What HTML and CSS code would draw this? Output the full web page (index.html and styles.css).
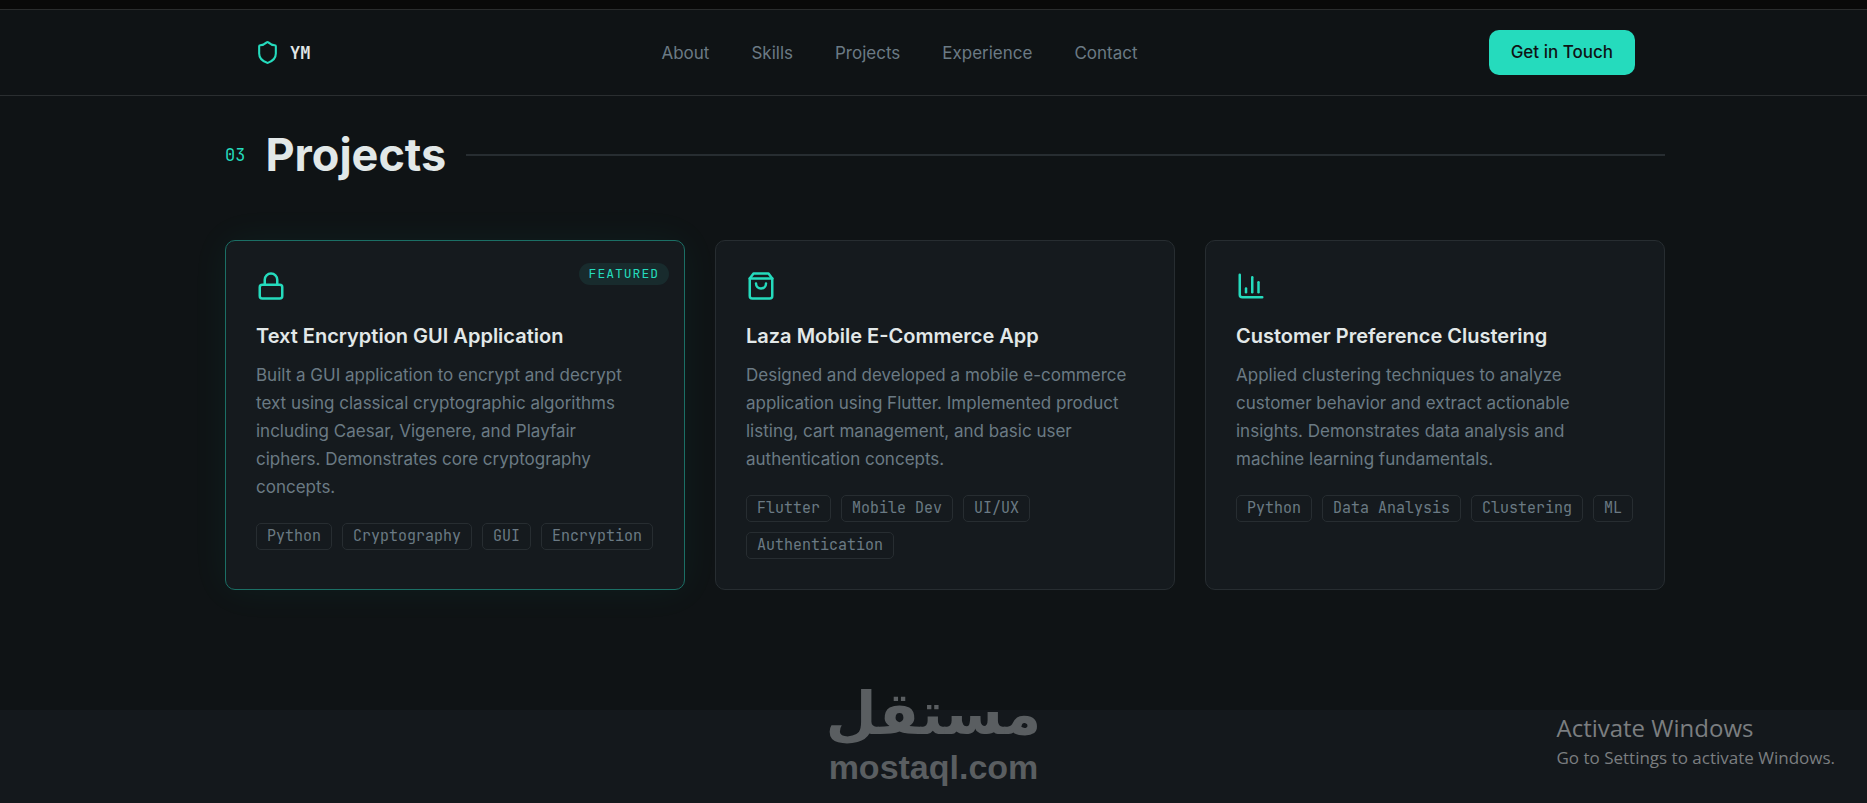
FILE: index.html
```html
<!DOCTYPE html>
<html lang="en">
<head>
<meta charset="utf-8">
<meta name="viewport" content="width=device-width, initial-scale=1">
<title>YM - Projects</title>
<link rel="stylesheet" href="styles.css">
</head>
<body>
<header class="header">
  <div class="container header-inner">
    <a class="logo" href="#top">
      <svg class="logo-icon" viewBox="0 0 24 24" aria-hidden="true"><path d="M20 13c0 5-3.500 7.500-7.660 8.950a1 1 0 0 1-.67-.01C7.500 20.500 4 18 4 13V6a1 1 0 0 1 1-1c2 0 4.500-1.200 6.240-2.720a1.170 1.170 0 0 1 1.520 0C14.510 3.810 17 5 19 5a1 1 0 0 1 1 1z"/></svg>
      <span>YM</span>
    </a>
    <nav class="nav" aria-label="Main">
      <a href="#about">About</a>
      <a href="#skills">Skills</a>
      <a href="#projects">Projects</a>
      <a href="#experience">Experience</a>
      <a href="#contact">Contact</a>
    </nav>
    <button class="cta" type="button">Get in Touch</button>
  </div>
</header>

<main>
  <section class="projects" id="projects">
    <div class="container">
      <div class="section-head">
        <span class="section-number">03</span>
        <h2 class="section-title">Projects</h2>
        <span class="section-rule"></span>
      </div>
      <div class="cards">
        <article class="card card-featured">
          <span class="badge">FEATURED</span>
          <svg class="card-icon" viewBox="0 0 24 24" aria-hidden="true"><rect x="3" y="11" width="18" height="11" rx="2"/><path d="M7 11V7a5 5 0 0 1 10 0v4"/></svg>
          <h3 class="card-title">Text Encryption GUI Application</h3>
          <p class="card-text">Built a GUI application to encrypt and decrypt text using classical cryptographic algorithms including Caesar, Vigenere, and Playfair ciphers. Demonstrates core cryptography concepts.</p>
          <ul class="tags"><li>Python</li><li>Cryptography</li><li>GUI</li><li>Encryption</li></ul>
        </article>
        <article class="card">
          <svg class="card-icon" viewBox="0 0 24 24" aria-hidden="true"><path d="M6 2 3 6v14a2 2 0 0 0 2 2h14a2 2 0 0 0 2-2V6l-3-4Z"/><path d="M3 6h18"/><path d="M16 10a4 4 0 0 1-8 0"/></svg>
          <h3 class="card-title">Laza Mobile E-Commerce App</h3>
          <p class="card-text">Designed and developed a mobile e-commerce application using Flutter. Implemented product listing, cart management, and basic user authentication concepts.</p>
          <ul class="tags"><li>Flutter</li><li>Mobile Dev</li><li>UI/UX</li><li>Authentication</li></ul>
        </article>
        <article class="card">
          <svg class="card-icon" viewBox="0 0 24 24" aria-hidden="true"><path d="M3 3v16a2 2 0 0 0 2 2h16"/><path d="M18 17V9"/><path d="M13 17V5"/><path d="M8 17v-3"/></svg>
          <h3 class="card-title">Customer Preference Clustering</h3>
          <p class="card-text">Applied clustering techniques to analyze customer behavior and extract actionable insights. Demonstrates data analysis and machine learning fundamentals.</p>
          <ul class="tags"><li>Python</li><li>Data Analysis</li><li>Clustering</li><li>ML</li></ul>
        </article>
      </div>
    </div>
  </section>
</main>

<div class="watermark">
  <span class="watermark-ar" lang="ar" dir="rtl">مستقل</span>
  <span class="watermark-en">mostaql.com</span>
</div>
<div class="activation">
  <p class="activation-title">Activate Windows</p>
  <p class="activation-text">Go to Settings to activate Windows.</p>
</div>
</body>
</html>
```
FILE: styles.css
```css
:root {
  --bg: #0f1315;
  --surface: #151a1e;
  --band: #14181c;
  --border: #272d31;
  --text: #e2e8e8;
  --muted: #6b7a84;
  --accent: #25dbbd;
  --sans: Inter, "Liberation Sans", sans-serif;
  --mono: "JetBrains Mono", "DejaVu Sans Mono", monospace;
}

* { box-sizing: border-box; }

body {
  margin: 0;
  min-height: 100vh;
  display: flex;
  flex-direction: column;
  position: relative;
  overflow: hidden;
  border-top: 9px solid #090909;
  background: var(--band);
  color: var(--text);
  font-family: var(--sans);
  font-size: 17px;
}

a { color: inherit; text-decoration: none; }

.container {
  width: 100%;
  max-width: 1440px;
  margin: 0 auto;
}

.header {
  border-top: 1px solid #2a2c2d;
  border-bottom: 1px solid #2a2e30;
  background: var(--bg);
  padding-left: 23px;
}

.header-inner {
  display: flex;
  align-items: center;
  justify-content: space-between;
  padding: 20px 30px;
}

.logo {
  display: flex;
  align-items: center;
  gap: 10px;
  font-family: var(--mono);
  font-weight: 700;
}

.logo-icon, .card-icon {
  display: block;
  fill: none;
  stroke: var(--accent);
  stroke-width: 2;
  stroke-linecap: round;
  stroke-linejoin: round;
}

.logo-icon { width: 25px; height: 25px; }

.nav {
  display: flex;
  gap: 42px;
  color: var(--muted);
}

.cta {
  padding: 10px 22px;
  border: 0;
  border-radius: 10px;
  background: var(--accent);
  color: #0f1315;
  font: 500 17px/25px var(--sans);
}

.projects {
  padding: 26px 0 120px 23px;
  background: var(--bg);
}

.section-head {
  display: flex;
  align-items: center;
  gap: 20px;
  margin-bottom: 52px;
}

.section-number {
  color: var(--accent);
  font-family: var(--mono);
}

.section-title {
  margin: 0;
  font-size: 45px;
  line-height: 66px;
  font-weight: 700;
}

.section-rule {
  flex: 1;
  height: 2px;
  background: var(--border);
}

.cards {
  display: grid;
  grid-template-columns: repeat(3, 1fr);
  gap: 30px;
}

.card {
  position: relative;
  padding: 30px;
  border: 1px solid var(--border);
  border-radius: 10px;
  background: var(--surface);
}

.card-featured {
  border-color: #1b6f65;
  box-shadow: 0 0 38px rgba(37, 219, 189, 0.06);
}

.badge {
  position: absolute;
  top: 22px;
  right: 15px;
  padding: 0 10px;
  border-radius: 11px;
  background: #182b2d;
  color: var(--accent);
  font: 13px/22px var(--mono);
  letter-spacing: 1px;
}

.card-icon {
  width: 30px;
  height: 30px;
  margin-bottom: 20px;
}

.card-title {
  margin: 0 0 10px;
  font-size: 20px;
  line-height: 30px;
  font-weight: 600;
}

.card-text {
  margin: 0 0 22px;
  padding-right: 12px;
  color: var(--muted);
  line-height: 28px;
}

.tags {
  display: flex;
  flex-wrap: wrap;
  gap: 10px;
  margin: 0;
  padding: 0;
  list-style: none;
}

.tags li {
  padding: 0 10px;
  border: 1px solid var(--border);
  border-radius: 5px;
  color: var(--muted);
  font: 15px/25px var(--mono);
}

.watermark {
  position: absolute;
  right: 0;
  bottom: 18px;
  left: 0;
  display: flex;
  flex-direction: column;
  align-items: center;
  color: #5a5e61;
  font-weight: 700;
  pointer-events: none;
}

.watermark-ar {
  font-family: "DejaVu Sans", sans-serif;
  font-size: 59px;
  line-height: 70px;
}

.watermark-en {
  font-family: "Liberation Sans", sans-serif;
  font-size: 34px;
  line-height: 36px;
}

.activation {
  position: absolute;
  right: 32px;
  bottom: 33px;
  color: #7b7e80;
  font-family: "Segoe UI", "Open Sans", sans-serif;
}

.activation p { margin: 0; }

.activation-title { font-size: 24px; line-height: 34px; }
.activation-text { font-size: 17px; line-height: 25px; }
```
